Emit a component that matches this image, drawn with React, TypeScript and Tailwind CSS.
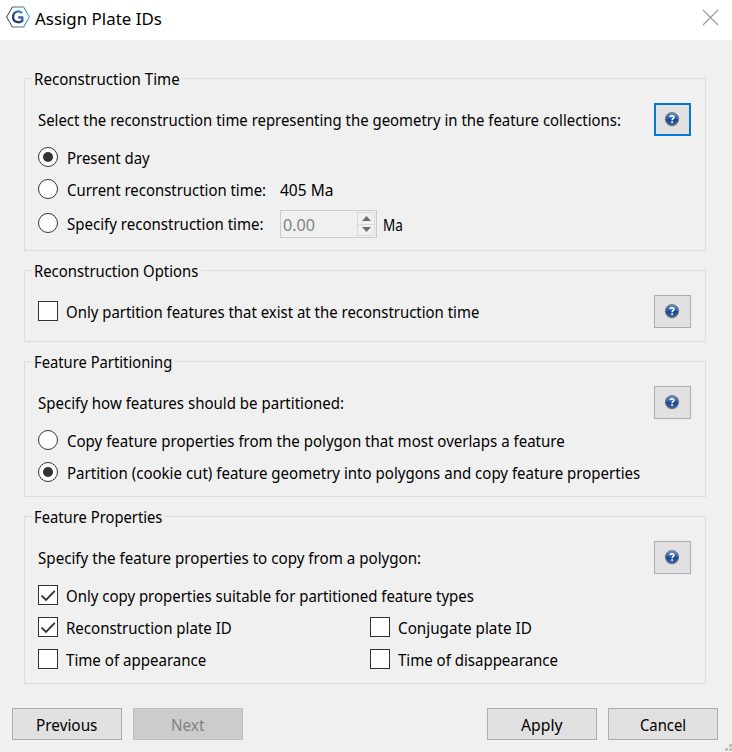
import { useLayoutEffect, useRef, useState, type ReactNode } from 'react';

/* Text that is condensed horizontally to occupy a given width. */
function Fit({ w, children, className = '' }: { w: number; children: string; className?: string }) {
  const ref = useRef<HTMLSpanElement>(null);
  const [scale, setScale] = useState(1);
  useLayoutEffect(() => {
    if (ref.current) setScale((w + 0.3) / ref.current.offsetWidth);
  }, [w]);
  return (
    <span className={`block whitespace-nowrap ${className}`} style={{ width: w }}>
      <span ref={ref} className="inline-block origin-left" style={{ transform: `scaleX(${scale})` }}>
        {children}
      </span>
    </span>
  );
}

function Group({ title, w, height, children }: { title: string; w: number; height: string; children: ReactNode }) {
  return (
    <section className={`relative border border-[#dcdcdc] pl-[13px] pr-[14px] pt-6 ${height}`}>
      <div className="absolute -top-[11px] left-[7px] bg-[#f0f0f0] pl-[2px] pr-[3px] leading-[22px]">
        <Fit w={w}>{title}</Fit>
      </div>
      {children}
    </section>
  );
}

function HelpButton({ focused = false }: { focused?: boolean }) {
  return (
    <button
      aria-label="Help"
      className={`flex h-[33px] w-[37px] items-center justify-center bg-[#e1e1e1] pb-px pr-px ${focused ? 'border-2 border-[#0078d7]' : 'border border-[#adadad]'}`}
    >
      <svg width="16" height="16" viewBox="0 0 16 16">
        <defs>
          <linearGradient id="ball" x1="0" y1="0" x2="0" y2="1">
            <stop offset="0" stopColor="#7594c6" />
            <stop offset="0.45" stopColor="#2f5fa8" />
            <stop offset="0.55" stopColor="#174690" />
            <stop offset="1" stopColor="#3867ae" />
          </linearGradient>
        </defs>
        <circle cx="8" cy="8.4" r="7.2" fill="#77736c" opacity="0.55" />
        <circle cx="8" cy="8" r="6.4" fill="url(#ball)" stroke="#5d6779" strokeWidth="0.7" />
        <path d="M6 6.2C6.2 4.5 9.9 4.3 9.9 6.3C9.9 7.7 8.1 7.7 8.1 9.3" fill="none" stroke="#fff" strokeWidth="1.6" />
        <rect x="7.2" y="10.3" width="1.8" height="1.6" fill="#fff" />
      </svg>
    </button>
  );
}

function Header({ text, w, focused }: { text: string; w: number; focused?: boolean }) {
  return (
    <div className="mb-[5px] flex h-[33px] items-center justify-between">
      <Fit w={w}>{text}</Fit>
      <HelpButton focused={focused} />
    </div>
  );
}

function RadioMark({ on = false }: { on?: boolean }) {
  return (
    <span className="flex size-5 shrink-0 items-center justify-center rounded-full border border-[#333] bg-white">
      {on && <span className="size-[10px] rounded-full bg-[#333]" />}
    </span>
  );
}

function Radio({ text, w, on, children }: { text: string; w: number; on?: boolean; children?: ReactNode }) {
  return (
    <label className="flex h-8 items-center">
      <RadioMark on={on} />
      <Fit w={w} className="ml-[9px] pt-[2px]">{text}</Fit>
      {children}
    </label>
  );
}

function Check({ text, w, on = false }: { text: string; w: number; on?: boolean }) {
  return (
    <label className="flex h-8 items-center">
      <span className="flex size-5 shrink-0 items-center justify-center border border-[#333] bg-white">
        {on && (
          <svg width="18" height="18" viewBox="0 0 18 18">
            <path d="M2.5 9.7L7 13.9L15.8 4.8" fill="none" stroke="#333" strokeWidth="1.8" />
          </svg>
        )}
      </span>
      <Fit w={w} className="ml-2 pt-[2px]">{text}</Fit>
    </label>
  );
}

function PushButton({ text, w, disabled = false }: { text: string; w: number; disabled?: boolean }) {
  return (
    <button
      className={`flex h-8 w-[110px] items-center justify-center border pr-px ${disabled ? 'border-[#bfbfbf] bg-[#cccccc] text-[#838383]' : 'border-[#adadad] bg-[#e1e1e1]'}`}
    >
      <Fit w={w} className="pt-[2px] text-left">{text}</Fit>
    </button>
  );
}

function SpinBox() {
  return (
    <span className="ml-[17px] mt-[2px] flex h-7 w-[97px] items-center justify-between border border-[#cccccc] bg-[#f0f0f0] pl-[2px] pr-[1px] text-[#838383]">
      <Fit w={32} className="pt-[2px]">0.00</Fit>
      <span className="flex h-6 w-[18px] flex-col border border-[#dadada]">
        <span className="flex flex-1 items-center justify-center border-b border-[#dadada]">
          <svg width="9" height="5" viewBox="0 0 9 5"><path d="M0 5L4.5 0L9 5Z" fill="#6d6d6d" /></svg>
        </span>
        <span className="flex flex-1 items-center justify-center">
          <svg width="9" height="5" viewBox="0 0 9 5"><path d="M0 0L4.5 5L9 0Z" fill="#6d6d6d" /></svg>
        </span>
      </span>
    </span>
  );
}

function Logo() {
  return (
    <svg width="24" height="22" viewBox="0 0 24 22">
      <defs>
        <linearGradient id="hex" x1="0" y1="0" x2="1" y2="0">
          <stop offset="0" stopColor="#48546b" />
          <stop offset="0.6" stopColor="#46749f" />
          <stop offset="1" stopColor="#4fa3d4" />
        </linearGradient>
        <linearGradient id="gee" x1="0" y1="1" x2="1" y2="0">
          <stop offset="0" stopColor="#252f62" />
          <stop offset="0.6" stopColor="#2b5593" />
          <stop offset="1" stopColor="#35a5dc" />
        </linearGradient>
      </defs>
      <path d="M6.4 1H17.6L23.4 11L17.6 21H6.4L0.6 11Z" fill="#fff" stroke="url(#hex)" strokeWidth="1.1" />
      <path d="M16.1 7.2C13.5 4.2 7.1 5.1 7.1 11C7.1 16.7 13.6 17.2 16.3 14.9V11.4H12.2" fill="none" stroke="url(#gee)" strokeWidth="2.3" />
    </svg>
  );
}

export default function App() {
  return (
    <div className="flex h-[752px] w-[732px] flex-col overflow-hidden bg-[#f0f0f0] font-['Noto_Sans',sans-serif] text-[16px] leading-[22px] text-black">
      <header className="flex h-10 shrink-0 justify-between bg-white pl-[6px] pr-[13px]">
        <div className="flex pt-[6px]">
          <Logo />
          <Fit w={127} className="ml-[5px] pt-[2px] text-[17px]">Assign Plate IDs</Fit>
        </div>
        <svg className="mt-[9px]" width="17" height="17" viewBox="0 0 17 17">
          <path d="M1 1L16 16M16 1L1 16" stroke="#999" strokeWidth="1.1" />
        </svg>
      </header>

      <main className="flex flex-col gap-[19px] pl-6 pr-[26px] pt-[38px]">
        <Group title="Reconstruction Time" w={145} height="h-[173px]">
          <Header text="Select the reconstruction time representing the geometry in the feature collections:" w={583} focused />
          <Radio text="Present day" w={82} on />
          <Radio text="Current reconstruction time:" w={199}>
            <Fit w={53} className="ml-[14px] pt-[2px]">405 Ma</Fit>
          </Radio>
          <div className="pt-[2px]">
            <Radio text="Specify reconstruction time:" w={196}>
              <SpinBox />
              <Fit w={20} className="ml-[6px] pt-[3px]">Ma</Fit>
            </Radio>
          </div>
        </Group>

        <Group title="Reconstruction Options" w={164} height="h-[72px]">
          <div className="flex items-start justify-between">
            <Check text="Only partition features that exist at the reconstruction time" w={413} />
            <HelpButton />
          </div>
        </Group>

        <Group title="Feature Partitioning" w={138} height="h-[136px]">
          <Header text="Specify how features should be partitioned:" w={306} />
          <Radio text="Copy feature properties from the polygon that most overlaps a feature" w={497} />
          <Radio text="Partition (cookie cut) feature geometry into polygons and copy feature properties" w={573} on />
        </Group>

        <Group title="Feature Properties" w={128} height="h-[168px]">
          <Header text="Specify the feature properties to copy from a polygon:" w={383} />
          <Check text="Only copy properties suitable for partitioned feature types" w={408} on />
          <div className="grid grid-cols-[332px_1fr]">
            <Check text="Reconstruction plate ID" w={165} on />
            <Check text="Conjugate plate ID" w={133} />
            <Check text="Time of appearance" w={140} />
            <Check text="Time of disappearance" w={160} />
          </div>
        </Group>
      </main>

      <footer className="flex pl-3 pr-[14px] pt-6">
        <div className="flex flex-1 gap-[11px]">
          <PushButton text="Previous" w={61} />
          <PushButton text="Next" w={33} disabled />
        </div>
        <div className="flex gap-[11px]">
          <PushButton text="Apply" w={41} />
          <PushButton text="Cancel" w={46} />
        </div>
      </footer>
      <svg className="ml-auto mt-1" width="7" height="8" viewBox="0 0 7 8">
        <path d="M4 0H7V3H4ZM0 4H3V7H0ZM4 4H7V7H4Z" fill="#bfbfbf" />
      </svg>
    </div>
  );
}
